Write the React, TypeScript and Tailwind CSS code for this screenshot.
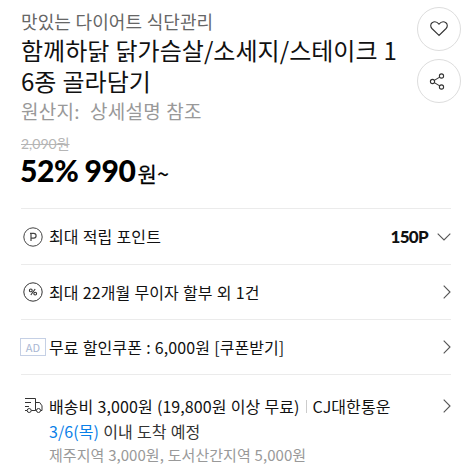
import type { ReactNode } from "react";
import clsx from "clsx";

function Chevron({ down = false }: { down?: boolean }) {
  return (
    <svg
      className={clsx("shrink-0", down ? "h-2 w-[14px]" : "h-[14px] w-2")}
      viewBox={down ? "0 0 14 8" : "0 0 8 14"}
      fill="none"
      stroke="#555"
      strokeWidth="1.1"
      aria-hidden="true"
    >
      <path d={down ? "M.7.7 7 7 13.3.7" : "M.7.7 7 7 .7 13.3"} />
    </svg>
  );
}

function HeartIcon() {
  return (
    <svg width="18" height="16" viewBox="0 0 18 16" fill="none" stroke="#333" strokeWidth="1.1">
      <path d="M9 14.4 1.9 7.5C.2 5.7.4 3 2.1 1.7 4.2.3 7 .7 9 3.2 11 .7 13.8.3 15.9 1.7c1.7 1.3 1.9 4 .2 5.8Z" />
    </svg>
  );
}

function ShareIcon() {
  return (
    <svg className="-ml-1" width="16" height="17" viewBox="0 0 16 17" fill="none" stroke="#333" strokeWidth="1.1">
      <circle cx="3.5" cy="8.5" r="2.1" />
      <circle cx="12.5" cy="3" r="2.1" />
      <circle cx="12.5" cy="14" r="2.1" />
      <path d="m5.3 7.4 5.4-3.3M5.3 9.6l5.4 3.3" />
    </svg>
  );
}

function TruckIcon() {
  return (
    <svg width="18" height="16" viewBox="0 0 18 16" fill="none" stroke="#333" strokeWidth="1">
      <path d="M0 .5h10.5v12H6.3M10.5 4.5h4.2l2.3 3.3v4.7h-1.4M10.5 12.5h.9M0 4.5h6M0 8.5h4M0 12.5h2" />
      <circle cx="4.2" cy="12.5" r="2" />
      <circle cx="13.5" cy="12.5" r="2" />
    </svg>
  );
}

function PointIcon() {
  return (
    <svg width="20" height="20" viewBox="0 0 20 20" fill="none" stroke="#444" strokeWidth="1">
      <circle cx="10" cy="10" r="9.2" />
      <path d="M8 14V6M7 6.4h3.7a2.4 2.4 0 0 1 0 4.8H8" strokeWidth="1.2" />
    </svg>
  );
}

function PercentIcon() {
  return (
    <svg width="20" height="20" viewBox="0 0 20 20" fill="none" stroke="#333" strokeWidth="1.1">
      <circle cx="10" cy="10" r="9.2" strokeWidth="1" />
      <circle cx="7.8" cy="8.4" r="1.4" />
      <circle cx="12.2" cy="11.6" r="1.4" />
      <path d="m12.2 7-4.4 6" />
    </svg>
  );
}

function RoundButton({ label, children }: { label: string; children: ReactNode }) {
  return (
    <button
      type="button"
      aria-label={label}
      className="flex size-11 items-center justify-center rounded-full border border-[#ddd] bg-white"
    >
      {children}
    </button>
  );
}

type InfoRowProps = {
  icon: ReactNode;
  right: ReactNode;
  children: ReactNode;
  className?: string;
};

function InfoRow({ icon, right, children, className }: InfoRowProps) {
  return (
    <div className={clsx("flex items-center border-t border-[#ebebeb]", className)}>
      <div className="flex w-7 shrink-0 items-center">{icon}</div>
      <div className="flex-1 pb-px whitespace-nowrap">{children}</div>
      {right}
    </div>
  );
}

export default function App() {
  return (
    <main className="h-[476px] w-[473px] overflow-hidden bg-white pl-[21px] font-['Noto_Sans_CJK_KR',sans-serif] text-base tracking-[0.08px] text-[#111] [word-spacing:0.5px]">
      <div className="flex justify-between">
        <div className="pt-2">
          <p className="text-lg/[26px] text-[#666]">맛있는 다이어트 식단관리</p>
          <h1 className="text-2xl/[31px] tracking-[0.04px] whitespace-nowrap">
            <span className="block">함께하닭 닭가슴살/소세지/스테이크 1</span>
            <span className="block">6종 골라담기</span>
          </h1>
          <p className="text-[19px]/[30px] tracking-[0.3px] whitespace-pre text-[#999]">원산지:  상세설명 참조</p>
        </div>
        <div className="flex flex-col gap-2 pt-[7px] pr-3">
          <RoundButton label="찜하기">
            <HeartIcon />
          </RoundButton>
          <RoundButton label="공유하기">
            <ShareIcon />
          </RoundButton>
        </div>
      </div>

      <div className="h-[82px] pt-2 font-[Lato,'Noto_Sans_CJK_KR',sans-serif] tracking-normal">
        <p className="text-sm/5 text-[#b5b5b5] line-through">2,090원</p>
        <p className="-mt-px -ml-px flex items-baseline text-[30px]/[34px] font-black tracking-[-0.4px] text-black">
          <span>52%</span>
          <span className="ml-1.5">990</span>
          <span className="ml-0.5 font-['Noto_Sans_CJK_KR',sans-serif] text-[21px]/[34px] font-normal tracking-[0.4px] [-webkit-text-stroke:0.25px_black]">원~</span>
        </p>
      </div>

      <div className="w-[430px]">
        <InfoRow
          className="h-14"
          icon={<span className="ml-0.5"><PointIcon /></span>}
          right={
            <div className="flex items-center gap-[9px]">
              <b className="font-[Lato,sans-serif] text-[17px] font-black tracking-[-0.7px]">150P</b>
              <Chevron down />
            </div>
          }
        >
          최대 적립 포인트
        </InfoRow>
        <InfoRow
          className="h-[55px]"
          icon={<span className="ml-0.5"><PercentIcon /></span>}
          right={<Chevron />}
        >
          최대 22개월 무이자 할부 외 1건
        </InfoRow>
        <InfoRow
          className="h-[55px]"
          icon={
            <span className="-ml-px flex h-[18px] w-[26px] items-center justify-center border border-[#c5d0e5] text-[11px] text-[#a9b7d3]">
              AD
            </span>
          }
          right={<Chevron />}
        >
          무료 할인쿠폰 : 6,000원 [쿠폰받기]
        </InfoRow>
        <div className="border-t border-[#ebebeb] pt-[19px]">
          <div className="flex h-6 items-center">
            <div className="w-7 shrink-0 pl-1">
              <TruckIcon />
            </div>
            <div className="flex flex-1 items-center whitespace-nowrap">
              배송비 3,000원 (19,800원 이상 무료)
              <span className="mx-1.5 h-[13px] w-px bg-[#ccc]" />
              CJ대한통운
            </div>
            <Chevron />
          </div>
          <div className="pl-7">
            <p className="text-base/[26px] text-[#333]">
              <span className="text-[#0a80e8]">3/6(목)</span> 이내 도착 예정
            </p>
            <p className="text-[15px]/[22px] tracking-[0.03px] text-[#999]">제주지역 3,000원, 도서산간지역 5,000원</p>
          </div>
        </div>
      </div>
    </main>
  );
}
